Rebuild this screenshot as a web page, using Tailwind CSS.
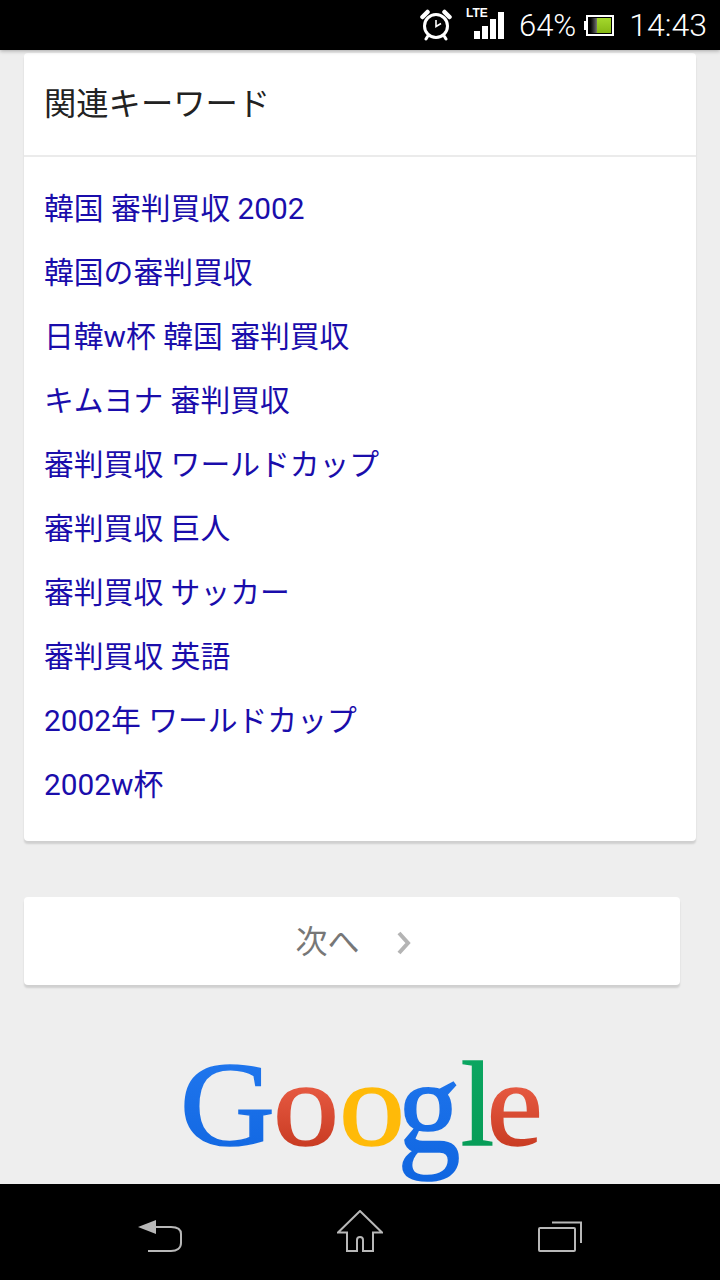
<!DOCTYPE html>
<html lang="ja">
<head>
    <meta charset="UTF-8">
    <meta name="viewport" content="width=device-width, initial-scale=1.0">
    <title>関連キーワード</title>
    <script src="https://cdn.jsdelivr.net/npm/@tailwindcss/browser@4"></script>
</head>
<body class="w-[720px] h-[1280px] overflow-hidden flex flex-col bg-[#eeeeee] font-['Roboto','Noto_Sans_CJK_JP',sans-serif]">

    <!-- status bar -->
    <div class="relative z-10 h-[50px] shrink-0 bg-black flex items-center justify-end text-white font-light shadow-[0_1px_4px_rgba(0,0,0,0.3)]">
        <svg class="w-[32px] h-[32px] mr-[22px]" viewBox="0 0 32 32" fill="none" stroke="#fff">
            <circle cx="16" cy="17" r="11.5" stroke-width="3"/>
            <path d="M16 11v6.5l5-3" stroke-width="1.6"/>
            <path d="M2.5 8 7.5 3" stroke-width="4.5" stroke-linecap="round"/>
            <path d="M29.5 8 24.5 3" stroke-width="4.5" stroke-linecap="round"/>
            <path d="M7.5 27.5 6 30M24.5 27.5 26 30" stroke-width="3" stroke-linecap="round"/>
        </svg>
        <div class="relative w-[31px] h-[32px] mr-[14px]">
            <span class="absolute left-[-8px] top-[-3px] text-[12px] leading-[14px] font-bold font-['Liberation_Sans',sans-serif]">LTE</span>
            <div class="absolute left-0 bottom-[2px] flex items-end gap-[2px]">
                <div class="w-[6px] h-[8px] bg-white"></div>
                <div class="w-[6px] h-[13px] bg-white"></div>
                <div class="w-[6px] h-[20px] bg-white"></div>
                <div class="w-[6px] h-[27px] bg-white"></div>
            </div>
        </div>
        <span class="text-[31px] leading-none mr-[8px]">64%</span>
        <div class="flex items-center mr-[15px]">
            <div class="w-[2px] h-[9px] bg-white"></div>
            <div class="w-[28px] h-[21px] border-2 border-white p-[1px] flex">
                <div class="w-[8px] bg-gradient-to-r from-black to-[#777]"></div>
                <div class="flex-1 bg-gradient-to-b from-[#a4d82c] to-[#86b814]"></div>
            </div>
        </div>
        <span class="text-[32px] leading-none mr-[13px]">14:43</span>
    </div>

    <!-- page content -->
    <div class="flex-1 overflow-hidden pt-[3px] px-[24px]">
        <div class="w-[672px] h-[788px] bg-white rounded-[4px] shadow-[0_3px_2px_rgba(0,0,0,0.13)]">
            <div class="h-[102px] pl-[20px] flex items-center text-[32.300px] leading-none text-[#222] border-b-2 border-[#ebebeb] box-content">関連キーワード</div>
            <div class="pt-[20px] pl-[20px] flex flex-col text-[29.800px] leading-[64px] text-[#1a0dab]">
                <a href="#" class="h-[64px]">韓国 審判買収 2002</a>
                <a href="#" class="h-[64px]">韓国の審判買収</a>
                <a href="#" class="h-[64px]">日韓w杯 韓国 審判買収</a>
                <a href="#" class="h-[64px]">キムヨナ 審判買収</a>
                <a href="#" class="h-[64px]">審判買収 ワールドカップ</a>
                <a href="#" class="h-[64px]">審判買収 巨人</a>
                <a href="#" class="h-[64px]">審判買収 サッカー</a>
                <a href="#" class="h-[64px]">審判買収 英語</a>
                <a href="#" class="h-[64px]">2002年 ワールドカップ</a>
                <a href="#" class="h-[64px]">2002w杯</a>
            </div>
        </div>

        <div class="mt-[56px] w-[656px] h-[88px] bg-white rounded-[4px] shadow-[0_3px_2px_rgba(0,0,0,0.13)] flex items-center justify-center text-[32px] leading-none text-[#777]">
            <span class="ml-[3px] mt-[2px]">次へ</span>
            <svg class="w-[16px] h-[24px] ml-[36px] mt-[4px]" viewBox="0 0 16 24" fill="none" stroke="#b4b4b4" stroke-width="4">
                <path d="M3 2 12 12 3 22"/>
            </svg>
        </div>

        <div class="mt-[50px] pl-[160px] flex text-[120px] leading-[140px] h-[140px] font-['Liberation_Serif',serif] [-webkit-text-stroke:1.5px_transparent]">
            <span class="inline-block scale-x-110 px-[3px] -mx-[3px] bg-gradient-to-b from-[#2279f0] to-[#0f65e0] bg-clip-text text-transparent">G</span>
            <span class="inline-block scale-x-110 ml-[2px] px-[3px] -mr-[3px] bg-gradient-to-b from-[#e4573f] from-[40%] to-[#c93b22] to-[80%] bg-clip-text text-transparent">o</span>
            <span class="inline-block scale-x-110 ml-[6px] bg-[#ffba08] bg-clip-text text-transparent">o</span>
            <span class="inline-block scale-x-105 scale-y-[1.130] origin-[50%_53px] -ml-[3px] bg-gradient-to-b from-[#2279f0] to-[#0f65e0] bg-clip-text text-transparent">g</span>
            <span class="inline-block ml-[2px] bg-gradient-to-b from-[#0ca863] to-[#059a55] bg-clip-text text-transparent">l</span>
            <span class="inline-block scale-x-[1.050] -ml-[6px] bg-gradient-to-b from-[#e4573f] from-[40%] to-[#c93b22] to-[80%] bg-clip-text text-transparent">e</span>
        </div>
    </div>

    <!-- nav bar -->
    <div class="relative z-10 h-[96px] shrink-0 bg-black flex items-start pt-[26px]">
        <svg class="w-[46px] h-[44px] ml-[137px]" viewBox="0 0 46 44" fill="none" stroke="#b8b8b8" stroke-width="2">
            <path d="M1 17 19 10V24Z" fill="#b8b8b8" stroke="none"/>
            <path d="M18 17H34C40 17 44 19 44 24V33C44 38 40 41 34 41H11"/>
        </svg>
        <svg class="w-[46px] h-[44px] ml-[154px]" viewBox="0 0 46 44" fill="none" stroke="#b8b8b8" stroke-width="2">
            <path d="M1 22.500 23 1 45 22.500H36V41H26V30C26 26 20 26 20 30V41H10V22.500Z"/>
        </svg>
        <svg class="w-[46px] h-[44px] ml-[154px]" viewBox="0 0 46 44" fill="none" stroke="#b8b8b8" stroke-width="2">
            <rect x="2" y="18" width="36" height="23" rx="1"/>
            <path d="M15 12.500H44V33"/>
        </svg>
    </div>
</body>
</html>
